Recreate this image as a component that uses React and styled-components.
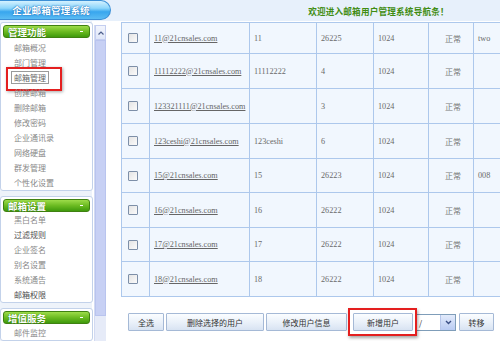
import React from 'react';
import styled, { createGlobalStyle } from 'styled-components';

const GlobalStyle = createGlobalStyle`
  html, body {
    margin: 0;
    padding: 0;
    background: #ffffff;
  }
  body {
    font-family: "Noto Sans CJK SC", "Liberation Sans", sans-serif;
  }
`;

const Page = styled.div`
  width: 500px;
  height: 341px;
  overflow: hidden;
  display: flex;
  flex-direction: column;
  background: #ffffff;
`;

const TopBar = styled.div`
  height: 21px;
  flex-shrink: 0;
  display: flex;
  align-items: stretch;
  background: #e7f0fb;
`;

const TitlePill = styled.div`
  width: 111px;
  height: 20px;
  box-sizing: border-box;
  border: 1px solid #3b8fd6;
  border-left: none;
  border-radius: 0 11px 11px 0;
  background: linear-gradient(#d3f1ff 0%, #8dd6fb 40%, #38a6ee 60%, #5bbcf3 100%);
  display: flex;
  align-items: center;
  justify-content: center;
  padding-right: 8px;
  color: #ffffff;
  font-weight: bold;
  font-size: 9.5px;
  letter-spacing: 0.2px;
  text-shadow: 0 0 2px #1c6fba, 0 0 1px #1c6fba;
`;

const Welcome = styled.div`
  flex: 1;
  display: flex;
  align-items: center;
  justify-content: center;
  padding-left: 146px;
  color: #3f8c12;
  font-weight: bold;
  font-size: 8.6px;
  letter-spacing: 0.2px;
`;

const Body = styled.div`
  flex: 1;
  display: flex;
  min-height: 0;
`;

const Sidebar = styled.div`
  width: 92px;
  flex-shrink: 0;
  display: flex;
  flex-direction: column;
  gap: 5px;
  padding-top: 1px;
  background: #eef3fa;
`;

const Panel = styled.div`
  background: #ffffff;
  border: 1px solid #c3d2ea;
  border-radius: 3px;
  padding: 2px 2px 0;
  width: 87px;
`;

const PanelHead = styled.div`
  height: 13px;
  box-sizing: border-box;
  border: 1px solid #3f8111;
  border-radius: 3px;
  background: linear-gradient(#9ddc4a 0%, #6cbb22 50%, #3f9a0c 100%);
  color: #ffffff;
  font-weight: bold;
  font-size: 9.5px;
  display: flex;
  align-items: center;
  justify-content: space-between;
  padding: 0 6px 0 4px;
  text-shadow: 0 0 1px #2d6a06;

  &::after {
    content: '';
    width: 3px;
    height: 1px;
    background: #ffffff;
  }
`;

const ItemList = styled.ul`
  list-style: none;
  margin: 0;
  padding: ${(p) => p.$pt || 0}px 0 0;
`;

const Item = styled.li`
  position: relative;
  height: 15px;
  line-height: 15px;
  padding-left: 11px;
  font-size: 8px;
  color: ${(p) => (p.$dark ? '#505050' : '#888')};

  ${(p) =>
    p.$marked &&
    `
    & > span {
      outline: 1px solid #9a9a9a;
      outline-offset: 0;
      padding: 0 2px;
      margin-left: -2px;
      color: #666;
    }
    &::after {
      content: '';
      position: absolute;
      left: 3px;
      top: -3px;
      width: 52px;
      height: 20px;
      border: 2px solid #e41f1f;
      box-shadow: 1px 1px 3px rgba(0,0,0,0.35);
    }
  `}
`;

const ScrollBar = styled.div`
  width: 11px;
  margin: 4px 1px 0 2px;
  flex-shrink: 0;
  display: flex;
  flex-direction: column;
  background: #e6ebf8;
  border-left: 1px solid #d2daf2;
`;

const ScrollButton = styled.div`
  height: 13px;
  background: linear-gradient(#f2f5fd, #dfe6f8);
  border: 1px solid #c4cef0;
  display: flex;
  align-items: center;
  justify-content: center;
`;

const ScrollThumb = styled.div`
  height: 274px;
  background: #c7d0f4;
  border: 1px solid #b9c4ee;
`;

const Main = styled.div`
  flex: 1;
  min-width: 0;
  overflow: hidden;
  padding: 1px 0 0 14px;
  display: flex;
  flex-direction: column;
`;

const Table = styled.table`
  border-collapse: collapse;
  width: 400px;
  table-layout: fixed;
  background: #f1f7fe;
  border: 1px solid #a9c5ec;
`;

const Row = styled.tr`
  height: ${(p) => p.$h}px;
`;

const Cell = styled.td`
  border: 1px solid #adc8ec;
  padding: 0 0 0 4px;
  font-family: "Liberation Serif", serif;
  font-size: 8.2px;
  color: #6a6a6a;
  text-align: ${(p) => p.$align || 'left'};
  white-space: nowrap;
  overflow: hidden;
`;

const CnText = styled.span`
  font-family: "Noto Sans CJK SC", sans-serif;
  font-size: 8px;
  color: #777;
`;

const Mail = styled.span`
  color: #666;
  text-decoration: underline;
`;

const Check = styled.span`
  display: inline-block;
  width: 8px;
  height: 8px;
  margin-left: 2px;
  border: 1px solid #7d8fa8;
  border-radius: 1px;
  background: linear-gradient(135deg, #e4e4e4, #fbfbfb);
  vertical-align: middle;
`;

const Actions = styled.div`
  display: flex;
  align-items: center;
  gap: 2px;
  margin-top: 16px;
  padding-left: 7px;
`;

const Btn = styled.button`
  position: relative;
  width: ${(p) => p.$w}px;
  height: 18px;
  margin-left: ${(p) => p.$ml || 0}px;
  padding: 0;
  border: 1px solid #a5b9d6;
  border-radius: 1px;
  background: linear-gradient(#fbfdff 0%, #e9f0f9 55%, #d8e3f2 100%);
  font-family: "Noto Sans CJK SC", sans-serif;
  font-size: 8px;
  color: #333;

  ${(p) =>
    p.$marked &&
    `
    &::after {
      content: '';
      position: absolute;
      left: -6px;
      top: -6px;
      right: -5px;
      bottom: -6px;
      border: 2px solid #e41f1f;
      box-shadow: 1px 2px 3px rgba(0,0,0,0.35);
      pointer-events: none;
    }
  `}
`;

const Select = styled.div`
  width: 41px;
  height: 17px;
  box-sizing: border-box;
  border: 1px solid #7f9db9;
  background: #ffffff;
  display: flex;
  align-items: center;
  justify-content: space-between;
  font-size: 8px;
  color: #333;
  padding-left: 3px;
`;

const SelectArrow = styled.span`
  width: 14px;
  height: 15px;
  background: linear-gradient(#e3ebfb, #b9cbf3);
  border-left: 1px solid #b7c6ea;
  display: flex;
  align-items: center;
  justify-content: center;
`;

const rows = [
  { h: 31, mail: '11@21cnsales.com', name: '11', size: '26225', note: 'two' },
  { h: 35, mail: '11112222@21cnsales.com', name: '11112222', size: '4', note: '' },
  { h: 35, mail: '123321111@21cnsales.com', name: '', size: '3', note: '' },
  { h: 35, mail: '123ceshi@21cnsales.com', name: '123ceshi', size: '6', note: '' },
  { h: 34, mail: '15@21cnsales.com', name: '15', size: '26223', note: '008' },
  { h: 35, mail: '16@21cnsales.com', name: '16', size: '26222', note: '' },
  { h: 34, mail: '17@21cnsales.com', name: '17', size: '26222', note: '' },
  { h: 35, mail: '18@21cnsales.com', name: '18', size: '26222', note: '' },
];

const panels = [
  {
    title: '管理功能',
    pt: 2,
    items: [
      { t: '邮箱概况' },
      { t: '部门管理' },
      { t: '邮箱管理', marked: true },
      { t: '创建邮箱' },
      { t: '删除邮箱' },
      { t: '修改密码' },
      { t: '企业通讯录' },
      { t: '网络硬盘' },
      { t: '群发管理' },
      { t: '个性化设置' },
    ],
  },
  {
    title: '邮箱设置',
    pt: 0,
    items: [
      { t: '黑白名单' },
      { t: '过滤规则', dark: true },
      { t: '企业签名' },
      { t: '别名设置' },
      { t: '系统通告' },
      { t: '邮箱权限', dark: true },
    ],
  },
  {
    title: '增值服务',
    pt: 1,
    items: [{ t: '邮件监控' }],
  },
];

export default function App() {
  return (
    <Page>
      <GlobalStyle />
      <TopBar>
        <TitlePill>企业邮箱管理系统</TitlePill>
        <Welcome>欢迎进入邮箱用户管理系统导航条！</Welcome>
      </TopBar>
      <Body>
        <Sidebar>
          {panels.map((p) => (
            <Panel key={p.title}>
              <PanelHead>{p.title}</PanelHead>
              <ItemList $pt={p.pt}>
                {p.items.map((it) => (
                  <Item key={it.t} $marked={it.marked} $dark={it.dark}>
                    <span>{it.t}</span>
                  </Item>
                ))}
              </ItemList>
            </Panel>
          ))}
        </Sidebar>
        <ScrollBar>
          <ScrollButton>
            <svg width="6" height="4" viewBox="0 0 6 4">
              <path d="M0.5 3.5 L3 1 L5.5 3.5" fill="none" stroke="#4d5f8c" strokeWidth="1.2" />
            </svg>
          </ScrollButton>
          <ScrollThumb />
        </ScrollBar>
        <Main>
          <Table>
            <colgroup>
              <col style={{ width: 28 }} />
              <col style={{ width: 100 }} />
              <col style={{ width: 67 }} />
              <col style={{ width: 57 }} />
              <col style={{ width: 55 }} />
              <col style={{ width: 45 }} />
              <col />
            </colgroup>
            <tbody>
              {rows.map((r) => (
                <Row key={r.mail} $h={r.h}>
                  <Cell>
                    <Check />
                  </Cell>
                  <Cell>
                    <Mail>{r.mail}</Mail>
                  </Cell>
                  <Cell>{r.name}</Cell>
                  <Cell>{r.size}</Cell>
                  <Cell>1024</Cell>
                  <Cell $align="center">
                    <CnText>正常</CnText>
                  </Cell>
                  <Cell>{r.note}</Cell>
                </Row>
              ))}
            </tbody>
          </Table>
          <Actions>
            <Btn $w={36}>全选</Btn>
            <Btn $w={98}>删除选择的用户</Btn>
            <Btn $w={81}>修改用户信息</Btn>
            <Btn $w={60} $ml={4} $marked>新增用户</Btn>
            <Select>
              /
              <SelectArrow>
                <svg width="7" height="5" viewBox="0 0 7 5">
                  <path d="M1 1 L3.5 3.5 L6 1" fill="none" stroke="#3b4f86" strokeWidth="1.4" />
                </svg>
              </SelectArrow>
            </Select>
            <Btn $w={35} $ml={1}>转移</Btn>
          </Actions>
        </Main>
      </Body>
    </Page>
  );
}
